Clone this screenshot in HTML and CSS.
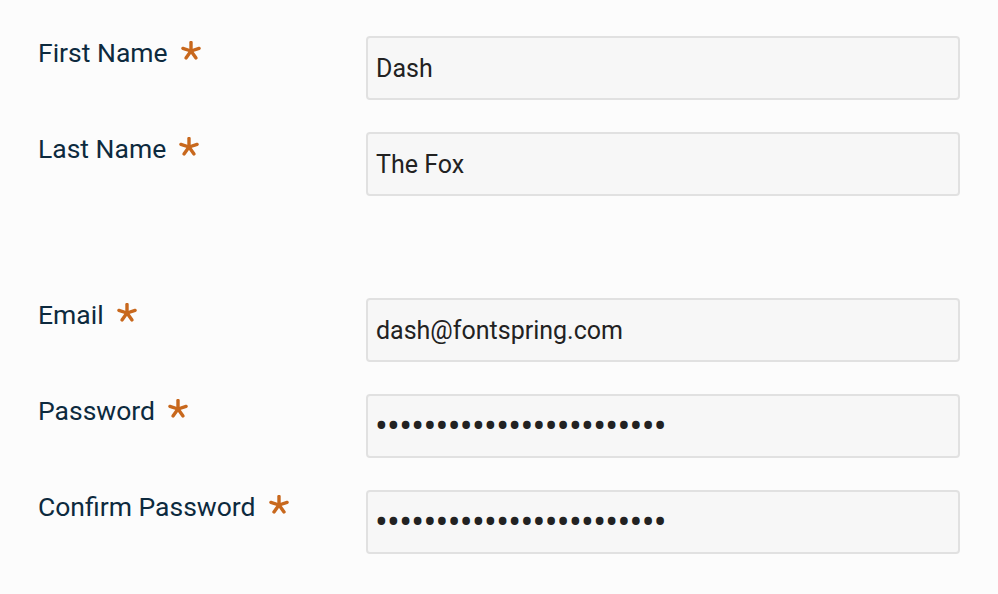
FILE: index.html
```html
<!DOCTYPE html>
<html lang="en">
<head>
<meta charset="utf-8">
<title>Account form</title>
<link rel="stylesheet" href="styles.css">
</head>
<body>
<form class="form">
  <div class="row">
    <label class="label" for="fn">First Name <svg class="req" viewBox="0 0 20 20"><g><line x1="10" y1="10" x2="10" y2="1.5"/><line x1="10" y1="10" x2="18.1" y2="7.4"/><line x1="10" y1="10" x2="15" y2="16.9"/><line x1="10" y1="10" x2="5" y2="16.9"/><line x1="10" y1="10" x2="1.9" y2="7.4"/></g></svg></label>
    <input class="field" id="fn" type="text" value="Dash">
  </div>
  <div class="row">
    <label class="label" for="ln">Last Name <svg class="req" viewBox="0 0 20 20"><g><line x1="10" y1="10" x2="10" y2="1.5"/><line x1="10" y1="10" x2="18.1" y2="7.4"/><line x1="10" y1="10" x2="15" y2="16.9"/><line x1="10" y1="10" x2="5" y2="16.9"/><line x1="10" y1="10" x2="1.9" y2="7.4"/></g></svg></label>
    <input class="field" id="ln" type="text" value="The Fox">
  </div>
  <div class="row row-gap">
    <label class="label" for="em">Email <svg class="req" viewBox="0 0 20 20"><g><line x1="10" y1="10" x2="10" y2="1.5"/><line x1="10" y1="10" x2="18.1" y2="7.4"/><line x1="10" y1="10" x2="15" y2="16.9"/><line x1="10" y1="10" x2="5" y2="16.9"/><line x1="10" y1="10" x2="1.9" y2="7.4"/></g></svg></label>
    <input class="field" id="em" type="email" value="dash@fontspring.com">
  </div>
  <div class="row">
    <label class="label" for="pw">Password <svg class="req" viewBox="0 0 20 20"><g><line x1="10" y1="10" x2="10" y2="1.5"/><line x1="10" y1="10" x2="18.1" y2="7.4"/><line x1="10" y1="10" x2="15" y2="16.9"/><line x1="10" y1="10" x2="5" y2="16.9"/><line x1="10" y1="10" x2="1.9" y2="7.4"/></g></svg></label>
    <input class="field pass" id="pw" type="password" value="dashthefox123456789abcde">
  </div>
  <div class="row">
    <label class="label" for="cpw">Confirm Password <svg class="req" viewBox="0 0 20 20"><g><line x1="10" y1="10" x2="10" y2="1.5"/><line x1="10" y1="10" x2="18.1" y2="7.4"/><line x1="10" y1="10" x2="15" y2="16.9"/><line x1="10" y1="10" x2="5" y2="16.9"/><line x1="10" y1="10" x2="1.9" y2="7.4"/></g></svg></label>
    <input class="field pass" id="cpw" type="password" value="dashthefox123456789abcde">
  </div>
</form>
</body>
</html>
```
FILE: styles.css
```css
html, body {
  margin: 0;
  background: #fcfcfc;
}
.form {
  padding: 36px 0 0 38px;
  display: flex;
  flex-direction: column;
  gap: 32px;
  font-family: Roboto, "Liberation Sans", sans-serif;
}
.row {
  display: grid;
  grid-template-columns: 328px 594px;
  align-items: start;
}
.row-gap {
  margin-top: 70px;
}
.label {
  font-size: 26.5px;
  line-height: 30px;
  padding-top: 2px;
  color: #0d2a3e;
  display: flex;
  align-items: center;
  gap: 13px;
}
.req {
  width: 20px;
  height: 20px;
  margin-top: -5px;
}
.req g {
  stroke: #c8681d;
  stroke-width: 3.4;
  stroke-linecap: round;
}
.field {
  box-sizing: border-box;
  height: 64px;
  width: 594px;
  margin: 0;
  padding: 0 8px;
  border: 2px solid #e1e1e1;
  border-radius: 4px;
  background: #f7f7f7;
  font-family: Roboto, "Liberation Sans", sans-serif;
  font-size: 25px;
  color: #222;
  outline: none;
}
.pass {
  font-size: 38px;
  letter-spacing: -0.7px;
  padding-left: 7px;
}
```
